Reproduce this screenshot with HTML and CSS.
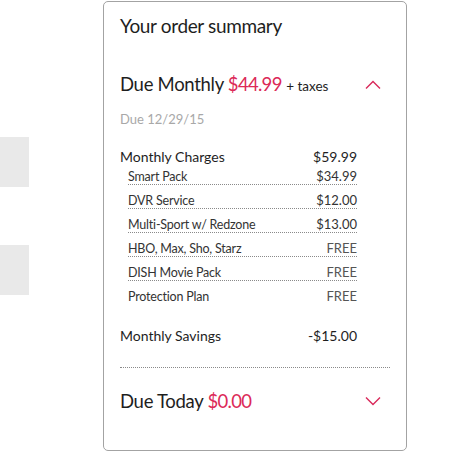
FILE: index.html
```html
<!DOCTYPE html>
<html>
<head>
<meta charset="utf-8">
<link rel="stylesheet" href="styles.css">
</head>
<body>
<div class="page">
  <div class="side">
    <div class="side-box first"></div>
    <div class="side-box second"></div>
  </div>
  <section class="card">
    <h2 class="title">Your order summary</h2>
    <div class="due-head monthly">
      <div class="due-text">Due Monthly <span class="amt">$44.99</span> <span class="taxes">+ taxes</span></div>
      <svg class="chev" width="16" height="10" viewBox="0 0 16 10"><polyline points="1,8.5 8,1.5 15,8.5" fill="none" stroke="#d9295a" stroke-width="1.4"/></svg>
    </div>
    <div class="due-date">Due 12/29/15</div>
    <div class="charges">
      <div class="row main"><span>Monthly Charges</span><span>$59.99</span></div>
      <div class="row sub"><span>Smart Pack</span><span class="val">$34.99</span></div>
      <div class="row sub"><span>DVR Service</span><span class="val">$12.00</span></div>
      <div class="row sub"><span>Multi-Sport w/ Redzone</span><span class="val">$13.00</span></div>
      <div class="row sub"><span>HBO, Max, Sho, Starz</span><span class="val free">FREE</span></div>
      <div class="row sub"><span>DISH Movie Pack</span><span class="val free">FREE</span></div>
      <div class="row sub last"><span>Protection Plan</span><span class="val free">FREE</span></div>
      <div class="row main savings"><span>Monthly Savings</span><span>-$15.00</span></div>
    </div>
    <div class="sep"></div>
    <div class="due-head today">
      <div class="due-text">Due Today <span class="amt">$0.00</span></div>
      <svg class="chev" width="16" height="10" viewBox="0 0 16 10"><polyline points="1,1.5 8,8.5 15,1.5" fill="none" stroke="#d9295a" stroke-width="1.4"/></svg>
    </div>
  </section>
</div>
</body>
</html>
```

FILE: styles.css
```css
html, body {
  margin: 0;
  padding: 0;
  background: #fff;
}
body {
  font-family: Lato, "Open Sans", Arial, sans-serif;
  color: #1e1e1e;
}
.page {
  display: flex;
  align-items: flex-start;
  padding-top: 1px;
}
.side {
  width: 29px;
  display: flex;
  flex-direction: column;
}
.side-box {
  height: 50px;
  background: #e9e9e9;
}
.side-box.first { margin-top: 136px; }
.side-box.second { margin-top: 58px; }
.card {
  margin-left: 74px;
  box-sizing: border-box;
  width: 304px;
  height: 450px;
  border: 1px solid #a3a3a3;
  border-radius: 5px;
  padding: 12px 16px 0 16px;
}
.title {
  margin: 0;
  font-size: 19px;
  line-height: 23px;
  font-weight: 400;
  letter-spacing: -0.35px;
  color: #1e1e1e;
}
.due-head {
  display: flex;
  justify-content: space-between;
  align-items: center;
}
.due-head.monthly { margin-top: 35px; }
.due-text {
  font-size: 18.5px;
  line-height: 24px;
  letter-spacing: -0.3px;
  color: #1e1e1e;
}
.amt {
  color: #dc2a58;
  letter-spacing: -0.7px;
}
.taxes {
  font-size: 13.5px;
  letter-spacing: 0;
}
.chev {
  margin-right: 9px;
  display: block;
}
.due-date {
  margin-top: 12px;
  font-size: 13px;
  line-height: 18px;
  color: #a8a8a8;
}
.charges {
  margin-top: 20px;
  margin-right: 33px;
}
.row {
  display: flex;
  justify-content: space-between;
  align-items: baseline;
}
.row.main {
  font-size: 14px;
  line-height: 17px;
  color: #1e1e1e;
}
.row.sub {
  margin-left: 8px;
  font-size: 12.5px;
  line-height: 16px;
  letter-spacing: -0.2px;
  padding-top: 7px;
  border-bottom: 1px dotted #8a8a8a;
  color: #333;
  height: 16px;
}
.row.sub .val { font-size: 13px; letter-spacing: 0; }
.row.main + .row.sub { padding-top: 3px; }
.row.sub.last { border-bottom: none; }
.free { color: #555; }
.row.savings { margin-top: 23px; }
.sep {
  margin-top: 23px;
  border-top: 1px dotted #8a8a8a;
}
.due-head.today { margin-top: 21px; }
```
